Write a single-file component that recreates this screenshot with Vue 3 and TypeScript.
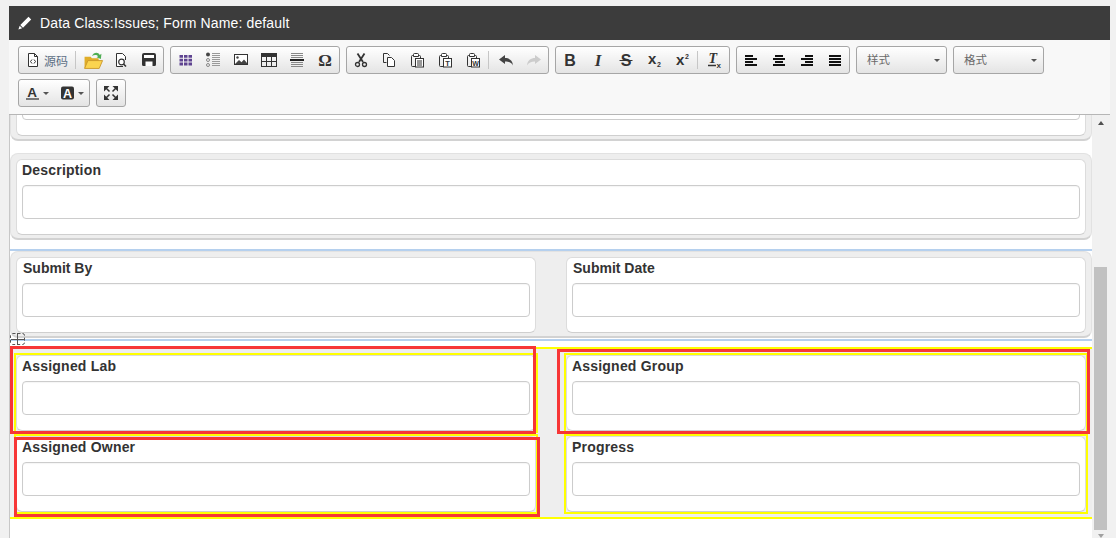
<script setup lang="ts">
interface Group {
  items: string[]
}

const T = 'font-family="Liberation Sans, sans-serif" font-weight="700" fill="#333"'
const CLIP =
  '<path d="M6.500 14.500h-3a1 1 0 0 1-1-1v-9a1 1 0 0 1 1-1h1M9.500 3.500h1a1 1 0 0 1 1 1v1.500" fill="none" stroke="#333"/><path d="M4.500 4.500v-2a1 1 0 0 1 1-1h3a1 1 0 0 1 1 1v2z" fill="#fff" stroke="#333"/><rect x="6.500" y="6.500" width="8" height="8.500" fill="#fff" stroke="#333"/>'

const icons: Record<string, string> = {
  source:
    '<path d="M3.500 1.500h6l3 3v10h-9z" fill="#fff" stroke="#333"/><path d="M9.500 1.500v3h3" fill="none" stroke="#333"/><path d="M7 7.500 5.500 9.500 7 11.500M9 7.500l1.500 2L9 11.500" fill="none" stroke="#333"/>',
  open:
    '<path d="M.5 5h5.500l1 1.500h6v8.500H.5z" fill="#e0ad28"/><path d="M.5 15.500 3.500 8.500H16.500L13.500 15.500z" fill="#fbd44f" stroke="#c9962a" stroke-width=".8"/><path d="M7 4.500c1.500-3.500 5.500-4 7-1l1.500-1-.5 4.500-3.800-1.500 1.300-.8C11.500 3.200 9 3.200 7 4.500z" fill="#4fae54"/>',
  preview:
    '<path d="M10 14.500H3.500v-13h6l3 3V8" fill="#fff" stroke="#333"/><circle cx="8.500" cy="10" r="2.800" fill="#fff" stroke="#333" stroke-width="1.200"/><path d="m10.500 12 2.500 2.500" stroke="#333" stroke-width="1.600"/>',
  save:
    '<path d="M1 3a2 2 0 0 1 2-2h10a2 2 0 0 1 2 2v9.500a1.500 1.500 0 0 1-1.500 1.500h-11A1.500 1.500 0 0 1 1 12.500z" fill="#333"/><rect x="3" y="3" width="10" height="3" fill="#fff"/><rect x="4.500" y="9.500" width="7" height="4.500" fill="#fff"/>',
  grid:
    '<path d="M2.500 3h3.500v2.800H2.500zM7 3h3.500v2.800H7zM11.500 3H15v2.800h-3.500zM2.500 6.800h3.500v2.800H2.500zM7 6.800h3.500v2.800H7zM11.500 6.800H15v2.800h-3.500zM2.500 10.600h3.500v2.800H2.500zM7 10.600h3.500v2.800H7zM11.500 10.600H15v2.800h-3.500z" fill="#5e4390"/>',
  list:
    '<circle cx="3" cy="2.500" r="2" fill="#444"/><circle cx="3" cy="8" r="1.500" fill="none" stroke="#888"/><circle cx="3" cy="13" r="1.500" fill="none" stroke="#888"/><path d="M7 1.500h8M7 3.500h8M7 5.500h8M7 7.500h8M7 9.500h8M7 11.500h8M7 13.500h8" stroke="#999"/>',
  image:
    '<rect x="1.500" y="2.500" width="13" height="10" fill="#fff" stroke="#333"/><path d="M2 12l4-4 2.500 2.200L11 7.500 14 11v1z" fill="#444"/><circle cx="4.500" cy="5.500" r="1.200" fill="#444"/>',
  table:
    '<rect x="1" y="1.500" width="14" height="3.500" fill="#333"/><rect x=".5" y="1.500" width="15" height="13" fill="none" stroke="#333"/><path d="M5.500 5v9M10.500 5v9M1 9.500h14" stroke="#333"/>',
  hr:
    '<path d="M2 1.500h12M2 3.500h12M2 5.500h12M2 10.500h12M2 12.500h12M2 14.500h12" stroke="#888"/><path d="M1 8h14" stroke="#222" stroke-width="2"/>',
  omega: `<text x="8" y="14" text-anchor="middle" font-size="17" font-family="Liberation Serif, serif" font-weight="700" fill="#333">Ω</text>`,
  cut:
    '<path d="M4.500 1.500 10 10M11.500 1.500 6 10" stroke="#333" stroke-width="1.800" fill="none"/><circle cx="4.500" cy="12.500" r="2" fill="none" stroke="#333" stroke-width="1.300"/><circle cx="11.500" cy="12.500" r="2" fill="none" stroke="#333" stroke-width="1.300"/>',
  copy:
    '<path d="M5.500 10.500h-3v-9h4l2 2" fill="none" stroke="#333"/><path d="M6.500 5.500h4l3 3v6h-7z" fill="#fff" stroke="#333"/>',
  paste: `${CLIP}<path d="M8 9h5M8 11h5M8 13h5" stroke="#333"/>`,
  pasteT: `${CLIP}<text x="10.500" y="13.500" text-anchor="middle" font-size="7.500" ${T}>T</text>`,
  pasteW: `${CLIP}<text x="10.500" y="13.500" text-anchor="middle" font-size="7" ${T}>W</text>`,
  undo: '<path d="M1 7.500 7 3v3c4 0 7.500 2 8 7.500-1.500-2.800-4-4-8-4V12z" fill="#444"/>',
  redo: '<path d="M15 7.500 9 3v3c-4 0-7.500 2-8 7.500 1.500-2.800 4-4 8-4V12z" fill="#ccc"/>',
  bold: `<text x="8" y="14" text-anchor="middle" font-size="16" ${T}>B</text>`,
  italic: `<text x="8" y="14" text-anchor="middle" font-size="17" font-style="italic" font-family="Liberation Serif, serif" font-weight="700" fill="#333">I</text>`,
  strike: `<text x="8" y="14" text-anchor="middle" font-size="16" ${T}>S</text><path d="M1.500 8.500h13" stroke="#333"/>`,
  sub: `<text x="2" y="12" font-size="15" ${T}>x</text><text x="11" y="15" font-size="7" ${T}>2</text>`,
  sup: `<text x="2" y="13" font-size="15" ${T}>x</text><text x="11" y="7" font-size="7" ${T}>2</text>`,
  clear: `<text x="1.500" y="11" font-size="14" font-style="italic" font-family="Liberation Serif, serif" font-weight="700" fill="#333">T</text><path d="M1 13.500h8" stroke="#333" stroke-width="1.500"/><text x="9.500" y="15.500" font-size="8" ${T}>x</text>`,
  left: '<path d="M2 3h8v2H2zM2 6h12v2H2zM2 9h8v2H2zM2 12h12v2H2z" fill="#111"/>',
  center: '<path d="M4 3h8v2H4zM2 6h12v2H2zM4 9h8v2H4zM2 12h12v2H2z" fill="#111"/>',
  right: '<path d="M6 3h8v2H6zM2 6h12v2H2zM6 9h8v2H6zM2 12h12v2H2z" fill="#111"/>',
  justify: '<path d="M2 3h12v2H2zM2 6h12v2H2zM2 9h12v2H2zM2 12h12v2H2z" fill="#111"/>',
  color: `<text x="7" y="11.500" text-anchor="middle" font-size="13.500" ${T}>A</text><path d="M1 14h13" stroke="#777" stroke-width="2"/>`,
  bgcolor: `<rect x="1" y="1.500" width="13" height="13" rx="2" fill="#333"/><text x="7.500" y="12.500" text-anchor="middle" font-size="12.500" font-family="Liberation Sans, sans-serif" font-weight="700" fill="#fff">A</text>`,
  maximize:
    '<path d="M1 1h5.500L1 6.500zM15 1v5.500L9.500 1zM1 15V9.500L6.500 15zM15 15H9.500L15 9.500z" fill="#333"/><path d="M3 3l3.500 3.500M13 3 9.500 6.500M3 13l3.500-3.500M13 13 9.500 9.500" stroke="#333" stroke-width="1.500"/>',
}

const firstRow: Group[] = [
  { items: ['source', 'sep', 'open', 'preview', 'save'] },
  { items: ['grid', 'list', 'image', 'table', 'hr', 'omega'] },
  { items: ['cut', 'copy', 'paste', 'pasteT', 'pasteW', 'sep', 'undo', 'redo'] },
  { items: ['bold', 'italic', 'strike', 'sub', 'sup', 'sep', 'clear'] },
  { items: ['left', 'center', 'right', 'justify'] },
]
const combos = ['样式', '格式']
</script>

<template>
  <div class="page">
    <div class="window">
      <header class="title">
        <svg class="pencil" viewBox="0 0 14 14" width="14" height="14">
          <path d="M10.500.8 13.200 3.500 5 11.700 2.300 9zM1.700 9.800 4.200 12.300.4 13.600z" fill="#fff" />
        </svg>
        <span>Data Class:Issues; Form Name: default</span>
      </header>

      <div class="toolbar">
        <div v-for="(group, i) in firstRow" :key="i" class="group">
          <template v-for="item in group.items" :key="item">
            <span v-if="item === 'sep'" class="sep"></span>
            <a v-else class="btn" :class="{ 'btn-source': item === 'source' }">
              <svg
                viewBox="0 0 16 16"
                :width="item === 'open' ? 18 : 16"
                :height="item === 'open' ? 18 : 16"
                v-html="icons[item]"
              ></svg>
              <span v-if="item === 'source'" class="source-label">源码</span>
            </a>
          </template>
        </div>
        <div v-for="combo in combos" :key="combo" class="group combo">
          <span>{{ combo }}</span>
          <i class="caret"></i>
        </div>
        <div class="group">
          <a class="btn btn-color">
            <svg viewBox="0 0 16 16" width="16" height="16" v-html="icons.color"></svg>
            <i class="caret"></i>
          </a>
          <a class="btn btn-color">
            <svg viewBox="0 0 16 16" width="16" height="16" v-html="icons.bgcolor"></svg>
            <i class="caret"></i>
          </a>
        </div>
        <div class="group">
          <a class="btn">
            <svg viewBox="0 0 16 16" width="16" height="16" v-html="icons.maximize"></svg>
          </a>
        </div>
      </div>

      <div class="body">
        <div class="content">
          <section class="panel panel-cut">
            <div class="card">
              <label>&nbsp;</label>
              <div class="input"></div>
            </div>
          </section>

          <section class="panel panel-desc">
            <div class="card">
              <label>Description</label>
              <div class="input"></div>
            </div>
          </section>

          <div class="rule"></div>

          <section class="panel two">
            <div class="card">
              <label class="nudge">Submit By</label>
              <div class="input"></div>
            </div>
            <div class="card">
              <label class="nudge">Submit Date</label>
              <div class="input"></div>
            </div>
          </section>

          <div class="rule rule-handle">
            <svg class="handle" viewBox="0 0 15 13" width="15" height="13">
              <rect x=".5" y=".5" width="14" height="11" rx="2" fill="none" stroke="#555" stroke-dasharray="3 2" />
              <path d="M7.500 0v12M1 6.500h13" stroke="#555" />
            </svg>
          </div>

          <section class="assigned two">
            <div class="card flagged">
              <label>Assigned Lab</label>
              <div class="input"></div>
              <span class="mark mark-lab"></span>
            </div>
            <div class="card flagged">
              <label>Assigned Group</label>
              <div class="input"></div>
              <span class="mark mark-group"></span>
            </div>
            <div class="card flagged">
              <label>Assigned Owner</label>
              <div class="input"></div>
              <span class="mark mark-owner"></span>
            </div>
            <div class="card flagged">
              <label>Progress</label>
              <div class="input"></div>
            </div>
          </section>
        </div>

        <div class="scrollbar">
          <i class="arrow arrow-up"></i>
          <div class="thumb"></div>
          <i class="arrow arrow-down"></i>
        </div>
      </div>
    </div>
  </div>
</template>

<style scoped>
.page {
  box-sizing: border-box;
  height: 538px;
  overflow: hidden;
  padding: 6px 6px 0 9px;
  background: #f1f1f1;
  font-family: "Liberation Sans", Arial, sans-serif;
}

.window {
  display: flex;
  flex-direction: column;
  height: 532px;
  background: #fff;
}

.title {
  display: flex;
  align-items: center;
  flex: none;
  height: 34px;
  padding-left: 9px;
  gap: 8px;
  background: #3c3c3c;
  color: #fff;
  font-size: 14px;
  letter-spacing: 0.14px;
}

.pencil {
  flex: none;
}

.toolbar {
  display: flex;
  flex-wrap: wrap;
  flex: none;
  align-content: flex-start;
  box-sizing: border-box;
  height: 75px;
  padding: 6px 0 0 9px;
  gap: 5px 6px;
  background: #f8f8f8;
  border-bottom: 1px solid #b6b6b6;
}

.group {
  display: flex;
  align-items: center;
  box-sizing: border-box;
  height: 28px;
  border: 1px solid #a6a6a6;
  border-radius: 3px;
  background: linear-gradient(#ffffff, #e4e4e4);
}

.btn {
  display: flex;
  align-items: center;
  justify-content: center;
  width: 28px;
  height: 26px;
}

.btn svg {
  overflow: visible;
}

.btn-source {
  justify-content: flex-start;
  box-sizing: border-box;
  width: 55px;
  padding-left: 6px;
  gap: 3px;
}

.btn-color {
  justify-content: flex-start;
  box-sizing: border-box;
  width: 35px;
  padding-left: 6px;
  gap: 2px;
}

.source-label {
  color: #5d6f85;
  font-family: "Noto Sans CJK SC", sans-serif;
  font-size: 12px;
}

.sep {
  box-sizing: border-box;
  width: 5px;
  height: 18px;
  padding: 0;
  border-left: 1px solid #c6c6c6;
  margin-left: 1px;
  margin-right: -1px;
}

.combo {
  justify-content: space-between;
  width: 91px;
  padding: 0 6px 2px 10px;
  color: #6a6a6a;
  font-family: "Noto Sans CJK SC", sans-serif;
  font-size: 11.500px;
}

.caret {
  flex: none;
  width: 0;
  height: 0;
  border-top: 3px solid #555;
  border-left: 3px solid transparent;
  border-right: 3px solid transparent;
}

.combo .caret {
  margin-top: 3px;
}

.body {
  display: flex;
  flex: 1;
  min-height: 0;
  border-left: 1px solid #c8c8c8;
}

.content {
  flex: 1;
  min-width: 0;
  overflow: hidden;
}

.panel {
  box-sizing: border-box;
  padding: 5px 5px 3px;
  background: #eeeeee;
  border: 1px solid #e2e2e2;
  border-bottom: 2px solid #d2d2d2;
  border-radius: 8px;
}

.panel-cut {
  margin-top: -61px;
  margin-bottom: 12px;
}

.panel-desc {
  margin-bottom: 9px;
}

.two {
  display: grid;
  grid-template-columns: 520px 520px;
  column-gap: 30px;
}

.card {
  position: relative;
  box-sizing: border-box;
  height: 76px;
  padding: 0 5px;
  background: #fff;
  border: 1px solid #dcdcdc;
  border-bottom-color: #cfcfcf;
  border-radius: 6px;
}

.card label {
  display: block;
  height: 25px;
  color: #333;
  font-size: 14px;
  font-weight: 700;
  line-height: 21px;
  letter-spacing: 0.2px;
}

.card label.nudge {
  padding-left: 1px;
  letter-spacing: 0;
}

.input {
  box-sizing: border-box;
  height: 34px;
  background: #fff;
  border: 1px solid #ccc;
  border-radius: 4px;
  box-shadow: inset 0 1px 1px rgba(0, 0, 0, 0.04);
}

.rule {
  height: 2px;
  background: #b5d0ee;
}

.rule-handle {
  position: relative;
  margin-top: 1px;
}

.handle {
  position: absolute;
  left: 0;
  top: -6px;
}

.assigned {
  margin-top: 6px;
  padding: 6px 6px 5px;
  row-gap: 5px;
  background: #eeeeee;
  border-top: 2px solid #ffff00;
  border-bottom: 2px solid #ffff00;
}

.flagged::before {
  content: "";
  position: absolute;
  inset: -3px;
  border: 2px solid #ffff00;
  pointer-events: none;
}

.mark {
  position: absolute;
  z-index: 1;
  border: 3px solid #f73636;
}

.mark-lab {
  left: -7px;
  right: -1px;
  top: -10px;
  bottom: -4px;
}

.mark-group {
  left: -10px;
  right: -5px;
  top: -7px;
  bottom: -4px;
}

.mark-owner {
  left: -3px;
  right: -5px;
  top: 0;
  bottom: -6px;
}

.scrollbar {
  display: flex;
  flex-direction: column;
  align-items: center;
  flex: none;
  width: 18px;
  background: #f1f1f1;
}

.arrow {
  flex: none;
  width: 0;
  height: 0;
  border-left: 3px solid transparent;
  border-right: 3px solid transparent;
}

.arrow-up {
  margin-top: 6px;
  border-bottom: 4px solid #505050;
}

.arrow-down {
  margin-top: 4px;
  border-top: 4px solid #a0a0a0;
}

.thumb {
  flex: none;
  width: 13px;
  height: 263px;
  margin-top: 142px;
  margin-right: 2px;
  background: #c1c1c1;
}
</style>

<style>
html,
body {
  margin: 0;
  overflow: hidden;
}
</style>
